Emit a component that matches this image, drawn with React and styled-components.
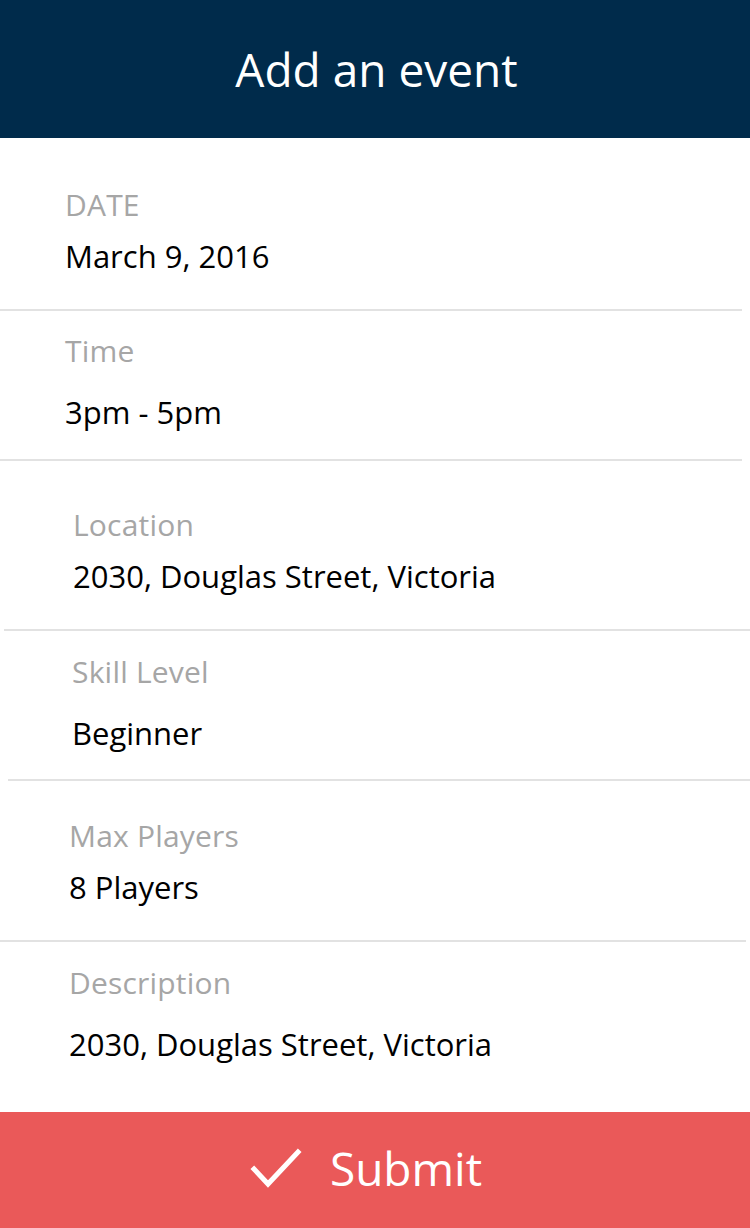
import React from "react";
import styled, { createGlobalStyle } from "styled-components";

const GlobalStyle = createGlobalStyle`
  html, body {
    margin: 0;
    padding: 0;
    background: #fff;
  }
  body {
    font-family: "Open Sans", "Noto Sans", sans-serif;
  }
`;

const Page = styled.div`
  width: 750px;
  height: 1228px;
  display: flex;
  flex-direction: column;
  background: #fff;
  overflow: hidden;
`;

const Header = styled.header`
  height: 138px;
  background: #002b4b;
  color: #fff;
  display: flex;
  align-items: center;
  justify-content: center;
  font-size: 46px;
  padding-left: 3px;
`;

const Form = styled.div`
  flex: 1;
  display: flex;
  flex-direction: column;
  padding-top: 2px;
`;

const Field = styled.div`
  display: flex;
  flex-direction: column;
  padding: ${(p) => p.$top}px 0 ${(p) => p.$bottom}px ${(p) => p.$indent}px;
  gap: ${(p) => p.$gap}px;
`;

const Label = styled.div`
  font-size: 30px;
  line-height: 40px;
  letter-spacing: 0.2px;
  color: #a6a6a6;
`;

const Value = styled.div`
  font-size: 31px;
  line-height: 40px;
  color: #000;
`;

const Divider = styled.div`
  height: 2px;
  background: #e2e2e2;
  margin: 0 ${(p) => p.$right}px 0 ${(p) => p.$left}px;
`;

const SubmitButton = styled.button`
  height: 116px;
  border: none;
  background: #ea5959;
  color: #fff;
  display: flex;
  align-items: center;
  justify-content: center;
  gap: 28px;
  font-family: "Open Sans", "Noto Sans", sans-serif;
  font-size: 46px;
  padding: 0 18px 4px 0;
  cursor: pointer;
`;

const CheckIcon = () => (
  <svg width="52" height="40" viewBox="0 0 52 40" fill="none">
    <path d="M4 21 L18 36 L48 4" stroke="#fff" strokeWidth="5" strokeLinecap="square" />
  </svg>
);

const fields = [
  { label: "DATE", value: "March 9, 2016", top: 45, gap: 11, bottom: 33, indent: 65, line: [0, 8] },
  { label: "Time", value: "3pm - 5pm", top: 20, gap: 21, bottom: 27, indent: 65, line: [0, 8] },
  { label: "Location", value: "2030, Douglas Street, Victoria", top: 44, gap: 11, bottom: 33, indent: 73, line: [4, 0] },
  { label: "Skill Level", value: "Beginner", top: 21, gap: 21, bottom: 26, indent: 72, line: [8, 0] },
  { label: "Max Players", value: "8 Players", top: 35, gap: 11, bottom: 33, indent: 69, line: [0, 4] },
  { label: "Description", value: "2030, Douglas Street, Victoria", top: 21, gap: 21, bottom: 0, indent: 69 },
];

const App = () => {
  return (
    <Page>
      <GlobalStyle />
      <Header>Add an event</Header>
      <Form>
        {fields.map((f) => (
          <React.Fragment key={f.label}>
            <Field $top={f.top} $gap={f.gap} $bottom={f.bottom} $indent={f.indent}>
              <Label>{f.label}</Label>
              <Value>{f.value}</Value>
            </Field>
            {f.line && <Divider $left={f.line[0]} $right={f.line[1]} />}
          </React.Fragment>
        ))}
      </Form>
      <SubmitButton>
        <CheckIcon />
        Submit
      </SubmitButton>
    </Page>
  );
};

export default App;
